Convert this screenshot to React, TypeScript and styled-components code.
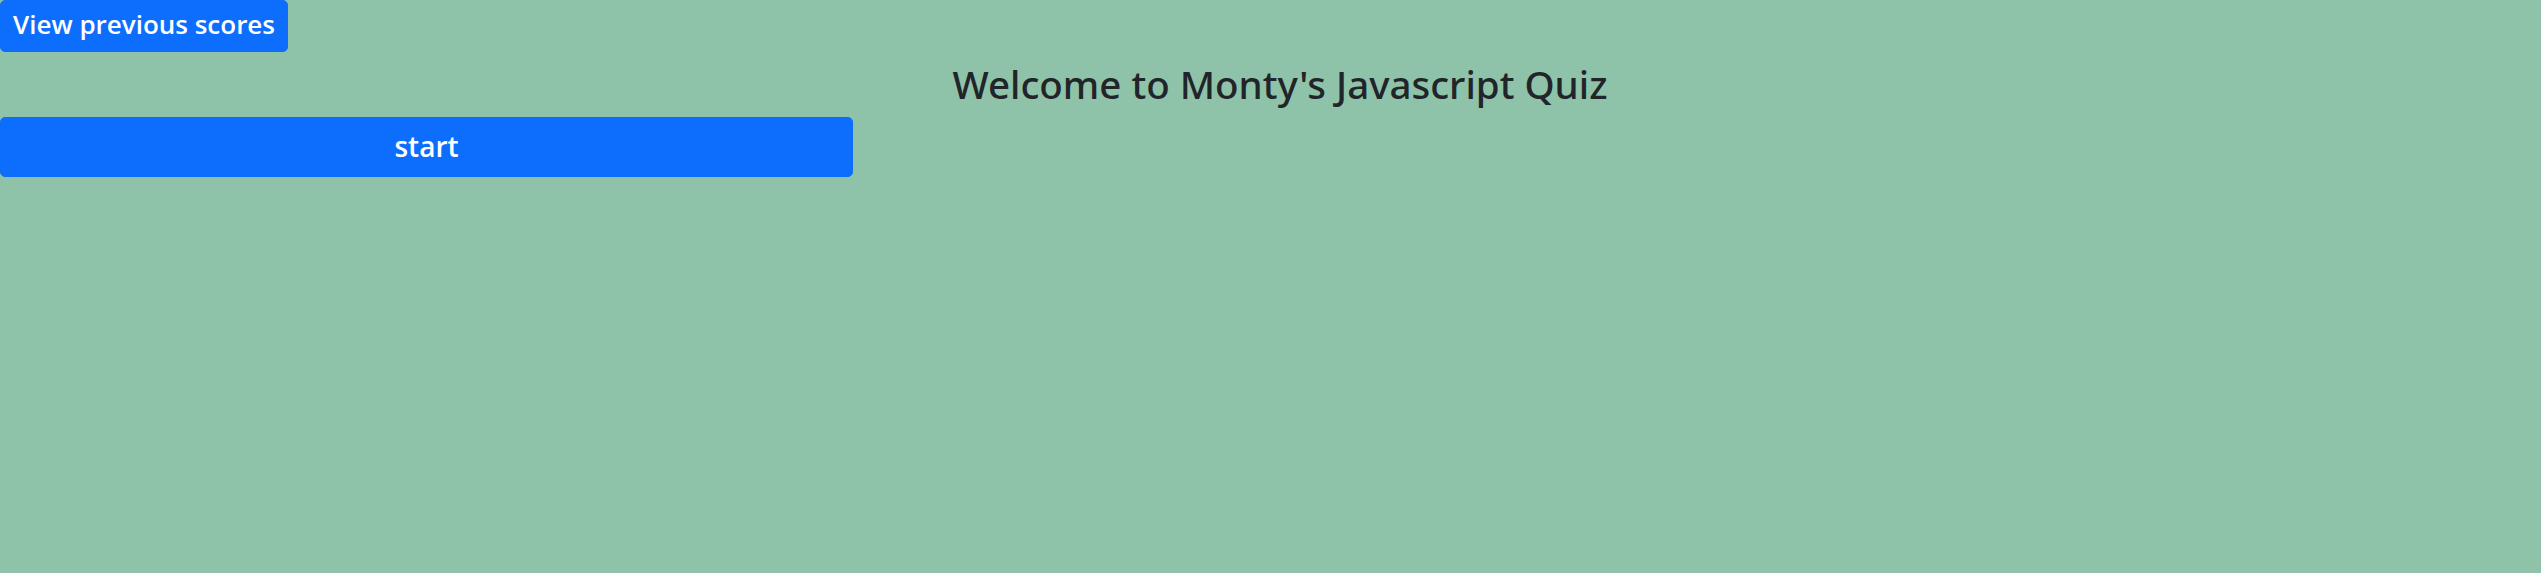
import React from "react";
import styled, { createGlobalStyle } from "styled-components";

const GlobalStyle = createGlobalStyle`
  html, body {
    margin: 0;
    padding: 0;
    background: #8ec3aa;
  }
  body {
    font-family: "Noto Sans", "Open Sans", sans-serif;
    color: #212529;
    min-height: 573px;
  }
  * { box-sizing: border-box; }
`;

const Page = styled.div`
  display: flex;
  flex-direction: column;
  align-items: flex-start;
  min-height: 573px;
  background: #8ec3aa;
`;

const Button = styled.button<{ $wide?: boolean }>`
  display: inline-block;
  font-family: "Open Sans", "Noto Sans", sans-serif;
  font-weight: 600;
  color: #ffffff;
  background: #0d6efd;
  border: 1px solid #0d6efd;
  border-radius: 5px;
  cursor: pointer;
  text-align: center;
  margin: 0;
  width: ${(p) => (p.$wide ? "853px" : "auto")};
  height: ${(p) => (p.$wide ? "60px" : "52px")};
  padding: ${(p) => (p.$wide ? "0 16px 3px" : "0 12px 4px")};
  font-size: ${(p) => (p.$wide ? "28px" : "26px")};
  line-height: 1;
`;

const Title = styled.h2`
  align-self: stretch;
  margin: 0 0 6px 19px;
  padding-top: 6px;
  font-family: "Noto Sans", "Open Sans", sans-serif;
  font-size: 38.5px;
  font-weight: 500;
  line-height: 53px;
  text-align: center;
  color: #212529;
`;

export default function App() {
  return (
    <>
      <GlobalStyle />
      <Page>
        <Button type="button">View previous scores</Button>
        <Title>Welcome to Monty's Javascript Quiz</Title>
        <Button type="button" $wide>
          start
        </Button>
      </Page>
    </>
  );
}
